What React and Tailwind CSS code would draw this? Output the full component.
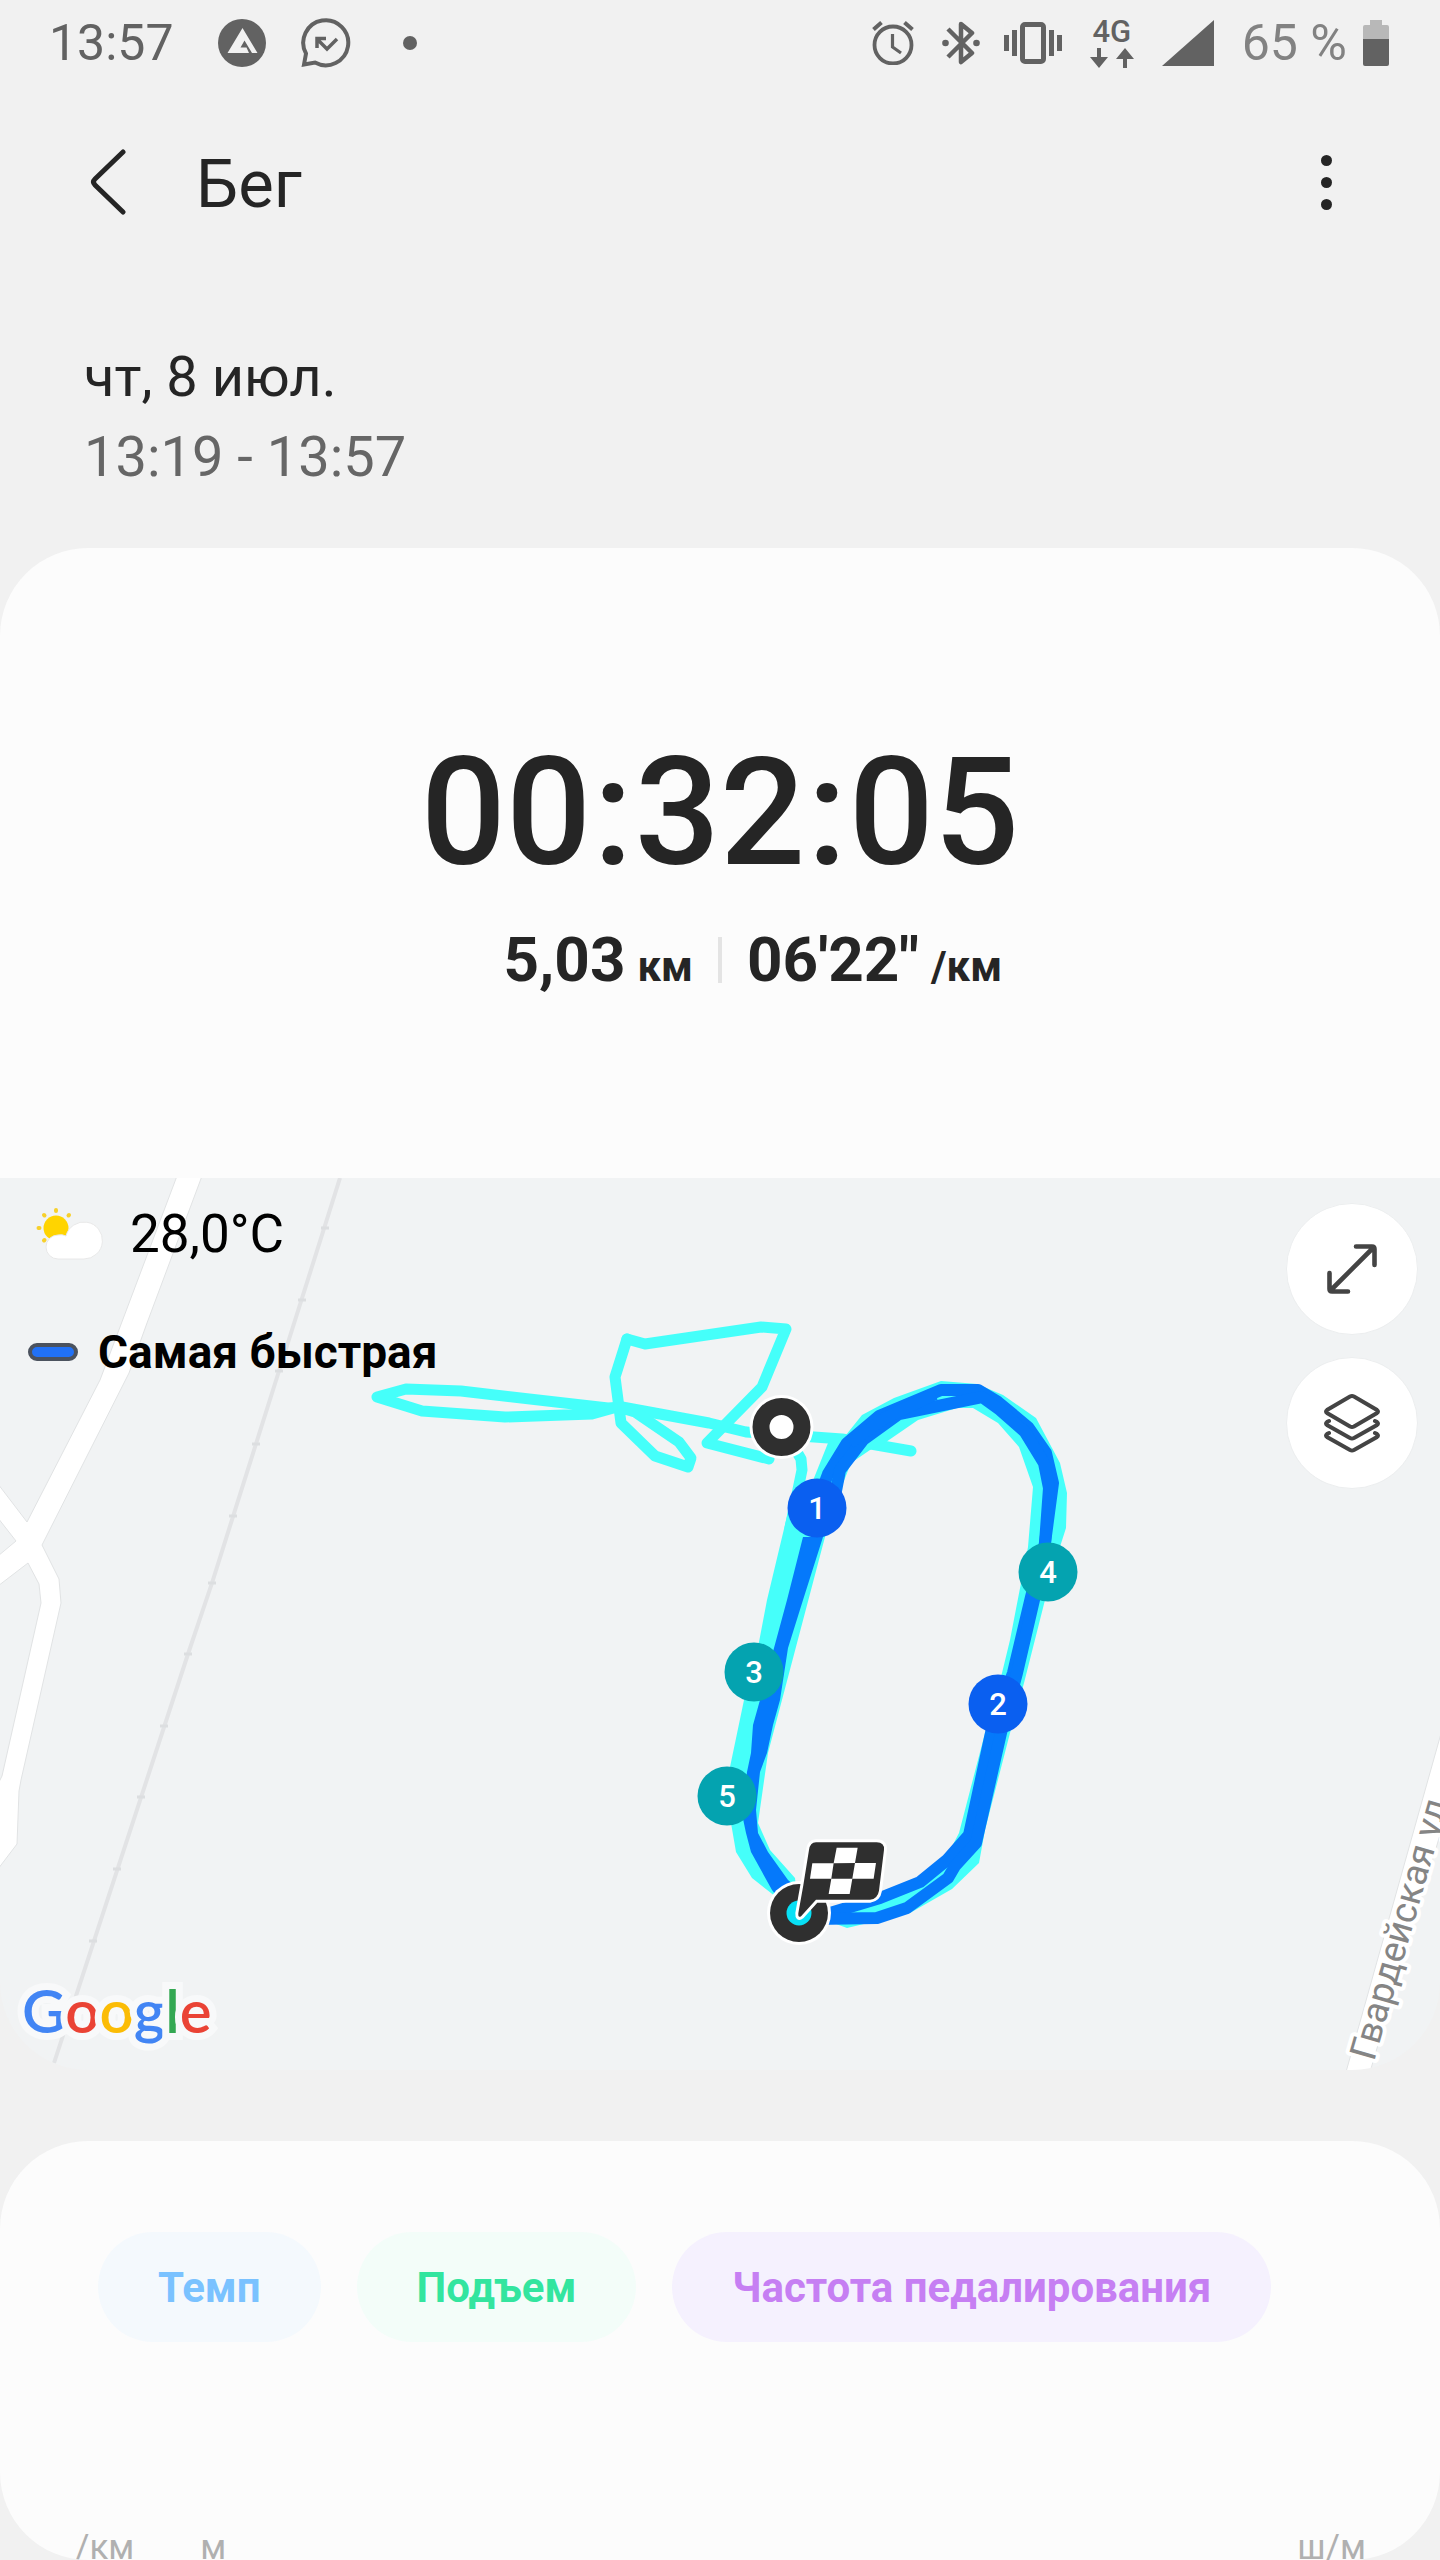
import React from "react";

const pins = [
  { label: "1", x: 817, y: 330, color: "#0a5ff0" },
  { label: "4", x: 1048, y: 394, color: "#04a3b0" },
  { label: "3", x: 754, y: 494, color: "#04a3b0" },
  { label: "2", x: 998, y: 526, color: "#0a5ff0" },
  { label: "5", x: 727, y: 618, color: "#04a3b0" },
];

const railTicks = [
  [325, 50],
  [302, 122],
  [279, 193],
  [256, 266],
  [233, 338],
  [212, 405],
  [188, 476],
  [164, 548],
  [141, 619],
  [117, 691],
  [93, 763],
];

const charts = [
  { name: "Темп", className: "bg-[#f4f9fd] text-[#7ac2ff]" },
  { name: "Подъем", className: "bg-[#f3fdf9] text-[#33e59f]" },
  { name: "Частота педалирования", className: "bg-[#f5f1fe] text-[#c67ff3]" },
];

const StatusBar = () => (
  <div className="flex h-[86px] items-center justify-between pl-[49px] pr-[51px] text-[50px] leading-none text-[#626262]">
    <div className="flex items-center">
      <span>13:57</span>
      {/* App notification */}
      <svg viewBox="0 0 48 48" className="ml-11 size-12">
        <circle cx="24" cy="24" r="24" fill="#626262" />
        <path
          d="M24.500 9 39.500 34H34L26.500 21.500 22.500 28.500H28.500L31 34H9.500Z"
          fill="#f1f1f1"
        />
      </svg>
      {/* Missed call bubble */}
      <svg viewBox="0 0 50 50" className="ml-[35px] size-[50px]" fill="none" stroke="#626262">
        <path
          d="M3 46.500 5 35.500A22.500 22.500 0 1 1 14 44.500Z"
          strokeWidth="4"
        />
        <path d="M36 21 26 31 16 21M16 30V20.500H25" strokeWidth="3.500" />
      </svg>
      <span className="ml-[52px] size-3.5 rounded-full bg-[#626262]" />
    </div>

    <div className="flex items-center gap-7">
      {/* Alarm */}
      <svg viewBox="0 0 42 44" className="h-11 w-[42px]" fill="none" stroke="#626262">
        <ellipse cx="21" cy="24" rx="18.500" ry="18.500" strokeWidth="3.800" />
        <path d="M20.500 13V26L29 32" strokeWidth="3.200" />
        <path d="M1.500 8.500 9.500 1.500M40.500 8.500 32.500 1.500" strokeWidth="4" />
      </svg>
      {/* Bluetooth */}
      <svg viewBox="0 0 38 44" className="h-11 w-[38px]" fill="none" stroke="#626262">
        <path d="M6 8 30 32 19 41V3L30 12 6 36" strokeWidth="4.500" strokeLinejoin="round" />
        <circle cx="3.500" cy="22" r="3.300" fill="#626262" stroke="none" />
        <circle cx="34.500" cy="22" r="3.300" fill="#626262" stroke="none" />
      </svg>
      {/* Vibration */}
      <svg viewBox="0 0 58 44" className="-ml-1 h-11 w-[58px]" fill="none" stroke="#626262">
        <rect x="18.500" y="3.500" width="21" height="37" rx="2.500" strokeWidth="5" />
        <path d="M2.500 14V30M55.500 14V30M10.500 9V35M47.500 9V35" strokeWidth="5" />
      </svg>
      {/* Mobile data */}
      <div className="flex w-11 flex-col items-center gap-0.5">
        <span className="text-[31px] leading-7 font-medium">4G</span>
        <svg viewBox="0 0 44 20" className="h-5 w-11" fill="#626262">
          <path d="M7 0h4v9h7L9 20 0 9h7z" />
          <path d="M33 20h4V11h7L35 0 26 11h7z" />
        </svg>
      </div>
      <svg viewBox="0 0 52 46" className="h-[46px] w-[52px]">
        <path d="M52 0V46H0Z" fill="#626262" />
      </svg>
      <div className="flex items-center gap-4">
        <span className="text-[#828282]">65 %</span>
        <svg viewBox="0 0 26 46" className="h-[46px] w-[26px]">
          <path d="M7 0H19V5H24a2 2 0 0 1 2 2V19H0V7A2 2 0 0 1 2 5H7Z" fill="#b8b8b8" />
          <path d="M0 19H26V44a2 2 0 0 1-2 2H2a2 2 0 0 1-2-2Z" fill="#626262" />
        </svg>
      </div>
    </div>
  </div>
);

const Header = () => (
  <header className="flex h-[192px] items-center pl-[90px] pr-[100px]">
    <button aria-label="Назад" className="shrink-0">
      <svg viewBox="0 0 36 66" className="h-[66px] w-9" fill="none" stroke="#252525">
        <path
          d="M33 3 5 30Q2 33 5 36L33 63"
          strokeWidth="5"
          strokeLinecap="round"
          strokeLinejoin="round"
        />
      </svg>
    </button>
    <h1 className="ml-[70px] flex-1 pt-1 text-[67px] leading-none">Бег</h1>
    <button aria-label="Ещё" className="flex w-7 flex-col items-center gap-[11px]">
      <span className="size-[11px] rounded-full bg-[#252525]" />
      <span className="size-[11px] rounded-full bg-[#252525]" />
      <span className="size-[11px] rounded-full bg-[#252525]" />
    </button>
  </header>
);

const Summary = () => (
  <section className="rounded-t-[88px] bg-[#fcfcfc] pt-[185px] pb-[182px]">
    <div className="flex justify-center text-[150px] leading-[160px] font-medium">
      <span>00</span>
      <span className="mx-0.5">:</span>
      <span>32</span>
      <span className="mx-0.5">:</span>
      <span>05</span>
    </div>
    <div className="mt-[31px] grid grid-cols-[1fr_auto_1fr] items-center text-[62px] leading-[72px] font-bold">
      <p className="pr-[25px] text-right">
        5,03<span className="ml-3 text-[42px] leading-none">км</span>
      </p>
      <span className="h-[46px] w-1 bg-[#e4e4e4]" />
      <p className="pl-[25px]">
        06'22"<span className="ml-3 text-[42px] leading-none">/км</span>
      </p>
    </div>
  </section>
);

const RouteMap = () => (
  <svg
    viewBox="0 0 1440 892"
    preserveAspectRatio="xMidYMid slice"
    className="block h-full w-full"
    fontFamily="Roboto, sans-serif"
  >
    {/* Roads */}
    <g fill="#fff" stroke="#e1e3e4" strokeWidth="1">
      <path d="M177-2 120 149 100 202 27 344-2 306V340L16 363-2 378V408L28 385 39 406 41 425 2 598-2 606V691L17 666 19 613 21 602 61 425 59 401 42 367 129 195 147 145 202-2Z" />
      <path d="M1442 552 1346 894H1370L1442 650Z" />
    </g>
    {/* Railway */}
    <path d="M340 0 279 193 212 405 188 476 54 885" fill="none" stroke="#e2e3e5" strokeWidth="4" />
    {railTicks.map(([x, y]) => (
      <path key={y} d={`M${x - 4} ${y}h8`} stroke="#dcdee0" strokeWidth="3" />
    ))}

    {/* Whole track */}
    <g fill="none" stroke="#45fffa" strokeWidth="11" strokeLinejoin="round" strokeLinecap="round">
      <path d="M617 229 592 236 505 239 422 233 377 219 406 211 461 213 608 230 622 229 709 245 746 254 842 261 911 273" />
      <path d="M627 161 645 166 761 149 786 151 762 209 707 265 769 281" />
      <path d="M627 161 615 199 618 222 621 245 655 278 688 289 691 280 679 264 635 234 618 229" />
      <path d="M790 262 801 281 802 292 790 350" />
    </g>
    <path
      d="M797 300 789 330 767 422 759 464 744 522 730 589 729 615 731 645 736 674 752 700 771 715 799 738 795 700 770 672 758 645 768 575 830 340Z"
      fill="#45fffa"
    />
    <path
      d="M808 315 828 265 846 257 862 237 894 220 941 203 977 206 1003 217 1036 240 1060 285 1067 315 1066 350 1058 375 1045 422 1024 505 1010 555 985 652 979 685 952 711 910 735 847 750 820 740 830 730 880 716 919 701 947 678 959 655 985 555 1002 495 1010 462 1021 405 1028 369 1033 309 1019 269 998 245 973 230 957 230 918 242 886 264 870 272 851 285 838 318 823 359Z"
      fill="#45fffa"
    />

    {/* Fastest part */}
    <g fill="none" stroke="#0579fb" strokeWidth="12" strokeLinejoin="round">
      <path d="M822 312 828 296 847 265 879 238 941 212 978 212 998 224 1028 249 1046 275 1053 305 1045 365 1031 419 1013 495 991 555 969 657 947 682 920 704 880 720 820 738" />
      <path d="M835 318 840 292 863 262 899 236 982 219 1000 232 1025 254 1044 285 1049 310 1045 365" />
      <path d="M1035 400 1034 422 1017 495 1001 555 976 665 955 688 948 700 907 730 877 740 815 741" />
      <path d="M850 265 885 240 935 216" />
    </g>
    <path
      d="M823 359 803 422 788 470 780 522 773 547 767 575 760 594 756 632 758 655 768 674 788 702 800 712 790 735 772 712 751 674 746 655 742 636 747 594 751 575 753 547 760 522 774 470 787 422 803 359Z"
      fill="#0579fb"
    />

    {/* Start */}
    <circle cx="781.500" cy="249" r="32" fill="#fff" />
    <circle cx="781.500" cy="249" r="20.500" fill="#fff" stroke="#2f2f2f" strokeWidth="17" />

    {/* Finish */}
    <circle cx="799" cy="735" r="32" fill="#fff" />
    <circle cx="799" cy="735" r="29" fill="#2f2f2f" />
    <circle cx="799" cy="735" r="12.500" fill="#08e0f5" />
    <g transform="translate(680 422) scale(.3333)">
      <path
        d="M408 727H590Q614 727 612 750L597 872Q593 897 570 899H408L364 948Q354 956 355 940L370 856 387 750Q390 728 408 727Z"
        fill="#2f2f2f"
        stroke="#fff"
        strokeWidth="18"
        strokeLinejoin="round"
        paintOrder="stroke"
      />
      <path
        d="M470 743H533L525 789H588L581 836H517L509 882H446L454 836H390L397 790H461ZM461 790 454 836H517L525 789Z"
        fill="#fff"
        fillRule="evenodd"
      />
    </g>

    {/* Kilometre pins */}
    {pins.map((pin) => (
      <g key={pin.label}>
        <circle cx={pin.x} cy={pin.y} r="29.500" fill={pin.color} />
        <text x={pin.x} y={pin.y + 11} textAnchor="middle" fontSize="31" fontWeight="500" fill="#fff">
          {pin.label}
        </text>
      </g>
    ))}

    <text
      transform="translate(1374 884) rotate(-74)"
      fontSize="37"
      fill="#858585"
      stroke="#fff"
      strokeWidth="8"
      strokeLinejoin="round"
      paintOrder="stroke"
    >
      Гвардейская ул
    </text>
  </svg>
);

const Weather = () => (
  <div className="flex items-center gap-[26px] pl-9">
    <svg viewBox="0 0 68 52" className="h-[52px] w-[68px]">
      <circle cx="20" cy="20" r="12.500" fill="#ffd400" />
      <path
        d="M20 2V3M8 7 8.500 7.500M33 7 32.500 7.500M2.500 20H3.500M8 32.500 8.500 32"
        stroke="#f7d02c"
        strokeWidth="4"
        strokeLinecap="round"
      />
      <path
        d="M22 51A12 12 0 0 1 22 27Q26 26 30 28A18.500 18.500 0 1 1 48 51Z"
        fill="#fff"
        stroke="#e8e8e8"
        strokeWidth="1"
      />
    </svg>
    <span className="text-[53px] leading-[60px]">28,0°C</span>
  </div>
);

const GoogleLogo = () => (
  <p className="absolute bottom-[30px] left-[22px] font-[Lato,sans-serif] text-[60px] leading-none font-semibold [-webkit-text-stroke:14px_#f8f9fa] [paint-order:stroke]">
    <span className="text-[#4285f4]">G</span>
    <span className="text-[#ea4335]">o</span>
    <span className="text-[#fbbc05]">o</span>
    <span className="text-[#4285f4]">g</span>
    <span className="text-[#34a853]">l</span>
    <span className="text-[#ea4335]">e</span>
  </p>
);

const MapCard = () => (
  <section className="relative mb-[71px] h-[892px] overflow-hidden rounded-b-[88px] bg-[#f1f3f4] text-black">
    <RouteMap />

    <div className="absolute top-[26px] left-0">
      <Weather />
      <div className="mt-[60px] flex items-center gap-5 pl-7">
        <span className="h-[18px] w-[50px] rounded-full border-4 border-[#4b525e] bg-[#2171f6]" />
        <span className="text-[46px] leading-[56px] font-bold">Самая быстрая</span>
      </div>
    </div>

    <div className="absolute top-[25px] right-[22px] flex flex-col gap-[22px]">
      <button
        aria-label="Развернуть карту"
        className="flex size-[132px] items-center justify-center rounded-full border border-[#eceeef] bg-white"
      >
        <svg viewBox="0 0 52 52" className="size-[52px]" fill="none" stroke="#444">
          <path
            d="M30 3.500H46Q48.500 3.500 48.500 6V22M3.500 30V46Q3.500 48.500 6 48.500H22M5 47 47 5"
            strokeWidth="4.600"
            strokeLinecap="round"
          />
        </svg>
      </button>
      <button
        aria-label="Слои карты"
        className="flex size-[132px] items-center justify-center rounded-full border border-[#eceeef] bg-white"
      >
        <svg viewBox="0 0 58 60" className="h-[60px] w-[58px]" fill="none" stroke="#444">
          <path
            d="M27 3.500Q29 2.500 31 3.500L54 17Q56 18.500 54 20L31 33.500Q29 34.500 27 33.500L4 20Q2 18.500 4 17Z"
            strokeWidth="4"
          />
          <path
            d="M6 28 4 29Q2 30.500 4 32L27 45Q29 46 31 45L54 32Q56 30.500 54 29L52 28M6 40 4 41Q2 42.500 4 44L27 57Q29 58 31 57L54 44Q56 42.500 54 41L52 40"
            strokeWidth="4"
            strokeLinecap="round"
          />
        </svg>
      </button>
    </div>

    <GoogleLogo />
  </section>
);

const Charts = () => (
  <section className="overflow-hidden rounded-[88px] bg-[#fcfcfc] pt-[91px]">
    <div className="flex gap-9 px-[98px]">
      {charts.map((chart) => (
        <button
          key={chart.name}
          className={`h-[110px] rounded-full px-[60px] text-[42px] font-bold whitespace-nowrap ${chart.className}`}
        >
          {chart.name}
        </button>
      ))}
    </div>
    {/* Axis units */}
    <div className="mt-[194px] flex pr-[74px] pl-[75px] text-[35px] leading-6 text-[#b0b0b0]">
      <span>/км</span>
      <span className="ml-[66px]">м</span>
      <span className="ml-auto">ш/м</span>
    </div>
  </section>
);

const App = () => {
  return (
    <div className="min-h-screen bg-[#f1f1f1] font-[Roboto,sans-serif] text-[#252525]">
      <StatusBar />
      <Header />
      <div className="px-[84px] pt-[59px] pb-[51px] text-[56px] leading-[80px]">
        <p>чт, 8 июл.</p>
        <p className="text-[#666]">13:19 - 13:57</p>
      </div>
      <Summary />
      <MapCard />
      <Charts />
    </div>
  );
};

export default App;
